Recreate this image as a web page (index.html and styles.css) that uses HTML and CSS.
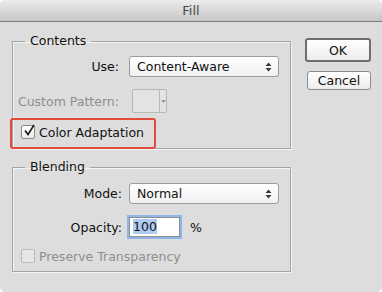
FILE: index.html
```html
<!DOCTYPE html>
<html lang="en">
<head>
<meta charset="UTF-8">
<meta name="viewport" content="width=device-width, initial-scale=1.0">
<title>Fill</title>
<link rel="stylesheet" href="styles.css">
</head>
<body>

<div class="window">
  <div class="titlebar">Fill</div>

  <div class="dialog">
    <div class="groups">
      <fieldset class="group contents">
        <legend>Contents</legend>
        <div class="row first">
          <label class="field-label">Use:</label>
          <div class="select">
            <span>Content-Aware</span>
            <svg class="arrows" width="7" height="10" viewBox="0 0 7 10"><path d="M3.5 0.5 L6.5 4 H0.5 Z M3.5 9.5 L6.5 6 H0.5 Z" fill="#3a3a3a"/></svg>
          </div>
        </div>
        <div class="row pattern-row disabled">
          <label class="field-label">Custom Pattern:</label>
          <div class="swatch">
            <span class="swatch-fill"></span>
            <span class="swatch-arrow">
              <svg width="5" height="3" viewBox="0 0 5 3"><path d="M0 0 H5 L2.5 3 Z" fill="#9a9a9a"/></svg>
            </span>
          </div>
        </div>
        <div class="row check-row">
          <span class="checkbox">
            <svg class="tick" width="14" height="14" viewBox="0 0 14 14"><path d="M3 6.5 L6 10.5 L12 1" fill="none" stroke="#1e1e1e" stroke-width="1.7"/></svg>
          </span>
          <span>Color Adaptation</span>
        </div>
      </fieldset>

      <fieldset class="group blending">
        <legend>Blending</legend>
        <div class="row first">
          <label class="field-label">Mode:</label>
          <div class="select">
            <span>Normal</span>
            <svg class="arrows" width="7" height="10" viewBox="0 0 7 10"><path d="M3.5 0.5 L6.5 4 H0.5 Z M3.5 9.5 L6.5 6 H0.5 Z" fill="#3a3a3a"/></svg>
          </div>
        </div>
        <div class="row opacity-row">
          <label class="field-label">Opacity:</label>
          <div class="text-input"><span class="selected">100</span></div>
          <span class="unit">%</span>
        </div>
        <div class="row check-row disabled">
          <span class="checkbox off"></span>
          <span>Preserve Transparency</span>
        </div>
      </fieldset>
    </div>

    <div class="buttons">
      <button class="btn btn-default">OK</button>
      <button class="btn">Cancel</button>
    </div>

    <div class="highlight"></div>
  </div>
</div>

</body>
</html>
```

FILE: styles.css
```css
body {
  margin: 0;
  background: #fff;
  font-family: "DejaVu Sans", sans-serif;
  font-size: 12.5px;
  color: #111;
}
.window {
  width: 382px;
  height: 292px;
  background: #dddddd;
  border-radius: 5px;
  overflow: hidden;
}
.titlebar {
  height: 21px;
  line-height: 22px;
  text-align: center;
  font-size: 13px;
  color: #4a4a4a;
  background: linear-gradient(#ececec, #c6c6c6);
  border-bottom: 1px solid #7c7c7c;
}
.dialog {
  position: relative;
  display: flex;
  padding: 11px 11px 0 12px;
}
.groups {
  width: 279px;
}
.group {
  margin: 0;
  padding: 0 0 7px 0;
  border: 1px solid #a4a4a4;
  box-shadow: 1px 1px 0 #f4f4f4, inset 1px 1px 0 #f4f4f4;
  min-width: 0;
}
.group legend {
  margin-left: 12px;
  padding: 0 5px;
  line-height: 16px;
  height: 16px;
}
.blending {
  margin-top: 10px;
  padding-bottom: 6px;
}
.row {
  display: flex;
  align-items: center;
}
.contents .first {
  margin-top: 7px;
}
.blending .first {
  margin-top: 8px;
}
.field-label {
  width: 106px;
  text-align: right;
  margin-right: 10px;
}
.blending .field-label {
  width: 109px;
  margin-right: 7px;
}
.disabled {
  color: #8e8e8e;
}
.select {
  box-sizing: border-box;
  width: 150px;
  height: 21px;
  display: flex;
  align-items: center;
  justify-content: space-between;
  padding: 0 6px 0 7px;
  background: linear-gradient(#ffffff, #f1f1f1);
  border: 1px solid #9c9c9c;
  border-radius: 3px;
}
.pattern-row {
  margin-top: 12px;
  height: 24px;
}
.swatch {
  box-sizing: border-box;
  display: flex;
  width: 35px;
  height: 24px;
  margin-left: 3px;
  border: 1px solid #b8b8b8;
  border-radius: 2px;
  background: #e3e3e3;
}
.swatch-fill {
  width: 26px;
  border-right: 1px solid #b8b8b8;
}
.swatch-arrow {
  flex: 1;
  display: flex;
  align-items: center;
  justify-content: center;
}
.check-row {
  height: 18px;
  margin-top: 10px;
  padding-left: 8px;
}
.checkbox {
  box-sizing: border-box;
  position: relative;
  width: 14px;
  height: 14px;
  margin-right: 4px;
  border: 1px solid #8a8a8a;
  border-radius: 2px;
  background: linear-gradient(#ffffff, #ececec);
}
.checkbox.off {
  border-color: #b9b9b9;
  background: #e6e6e6;
}
.tick {
  position: absolute;
  left: 0;
  top: -2px;
}
.opacity-row {
  margin-top: 13px;
}
.text-input {
  box-sizing: border-box;
  width: 51px;
  height: 20px;
  padding: 1px 0 0 3px;
  background: #fff;
  border: 1px solid #8e8e8e;
  box-shadow: 0 0 0 2px #8fb6e6;
  line-height: 16px;
}
.selected {
  background: #aecbf2;
}
.unit {
  margin-left: 10px;
}
.buttons {
  margin-left: auto;
  margin-top: 5px;
  display: flex;
  flex-direction: column;
  align-items: flex-end;
}
.btn {
  box-sizing: border-box;
  width: 64px;
  height: 19px;
  padding: 0;
  font-family: "DejaVu Sans", sans-serif;
  font-size: 12.5px;
  color: #111;
  background: linear-gradient(#ffffff, #ededed);
  border: 1px solid #8c8c8c;
  border-radius: 3px;
}
.btn-default {
  width: 66px;
  height: 24px;
  margin-bottom: 9px;
  border: 2px solid #6e6e6e;
}
.highlight {
  position: absolute;
  left: 10px;
  top: 96px;
  box-sizing: border-box;
  width: 146px;
  height: 31px;
  border: 2px solid #e24b3c;
  border-radius: 3px;
}
```
